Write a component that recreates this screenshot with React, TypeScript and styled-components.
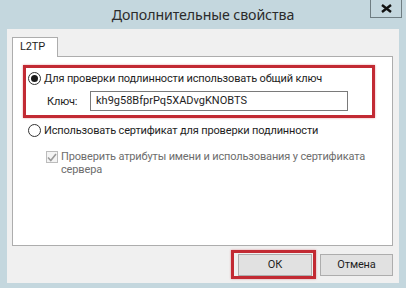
import styled, { createGlobalStyle } from "styled-components";

const GlobalStyle = createGlobalStyle`
  html, body {
    margin: 0;
    padding: 0;
  }
  body {
    width: 406px;
    height: 288px;
    overflow: hidden;
    font-family: Roboto, "Noto Sans", sans-serif;
    font-size: 11px;
    letter-spacing: -0.15px;
    color: #1e1e1e;
  }
`;

// window frame
const Window = styled.div`
  width: 406px;
  height: 288px;
  box-sizing: border-box;
  background: #c4d7de;
  display: flex;
  flex-direction: column;
  padding: 0 7px 5px 7px;
`;
const TitleBar = styled.div`
  height: 29px;
  margin: 0 -7px;
  display: grid;
  grid-template-columns: 1fr auto 1fr;
`;
const Title = styled.div`
  grid-column: 2;
  font-family: "Noto Sans", sans-serif;
  font-size: 14.2px;
  letter-spacing: -0.1px;
  line-height: 29px;
  color: #2b2b2b;
`;
const CloseButton = styled.div`
  grid-column: 3;
  justify-self: end;
  align-self: start;
  margin-right: 4px;
  width: 32px;
  height: 18px;
  box-sizing: border-box;
  border: 1px solid #6f7d82;
  border-top: none;
  display: flex;
  align-items: center;
  justify-content: center;
`;

// client area
const Client = styled.div`
  flex: 1;
  background: #f0f0f0;
  display: flex;
  flex-direction: column;
  padding: 8px 6px 7px 5px;
`;
const TabStrip = styled.div`
  display: flex;
  height: 19px;
`;
const Tab = styled.div`
  width: 46px;
  box-sizing: border-box;
  background: #fff;
  border: 1px solid #adadad;
  border-bottom: none;
  line-height: 18px;
  padding-left: 7px;
  margin-bottom: -1px;
  position: relative;
  z-index: 1;
`;
const Panel = styled.div`
  flex: 1;
  background: #fff;
  border: 1px solid #adadad;
  padding: 8px 17px 0 10px;
  display: flex;
  flex-direction: column;
`;
const Highlight = styled.div`
  border: 3px solid #c22a33;
  box-shadow: 0 0 2px rgba(200, 40, 50, 0.45);
  padding: 3px 0 4px 2px;
  display: flex;
  flex-direction: column;
  gap: 6px;
`;
const OptionRow = styled.div<{ $indent?: number }>`
  display: flex;
  align-items: center;
  height: 14px;
  margin-left: ${(p) => p.$indent ?? 0}px;
  gap: 3px;
`;
const Radio = styled.span<{ $checked?: boolean }>`
  width: 13px;
  height: 13px;
  box-sizing: border-box;
  border-radius: 50%;
  border: 1px solid #333;
  background: #fff;
  display: flex;
  align-items: center;
  justify-content: center;
  &::after {
    content: "";
    width: 7px;
    height: 7px;
    border-radius: 50%;
    background: ${(p) => (p.$checked ? "#1a1a1a" : "transparent")};
  }
`;
const KeyRow = styled.div`
  display: flex;
  align-items: center;
  padding-left: 19px;
`;
const KeyLabel = styled.span`
  width: 43px;
`;
const KeyInput = styled.div`
  width: 258px;
  height: 20px;
  box-sizing: border-box;
  border: 1px solid #7a7a7a;
  padding-left: 5px;
  line-height: 18px;
  letter-spacing: 0;
`;
const CheckRow = styled.div`
  display: flex;
  align-items: flex-start;
  margin: 13px 0 0 23px;
  gap: 3px;
  color: #6d6d6d;
`;
const CheckBox = styled.span`
  flex: none;
  width: 12px;
  height: 12px;
  margin-top: 1px;
  box-sizing: border-box;
  border: 1px solid #bcbcbc;
  background: #f4f4f4;
  display: flex;
  align-items: center;
  justify-content: center;
`;
const CheckText = styled.span`
  line-height: 13px;
  width: 312px;
`;

// buttons
const ButtonRow = styled.div`
  margin-top: 8px;
  height: 22px;
  display: flex;
  justify-content: flex-end;
  align-items: center;
  gap: 4px;
`;
const Marked = styled.div`
  border: 3px solid #c22a33;
  box-shadow: 0 0 2px rgba(200, 40, 50, 0.45);
  padding: 1px 1px 0 4px;
  margin: -4px 0 -3px 0;
`;
const Button = styled.div<{ $width: number }>`
  width: ${(p) => p.$width}px;
  height: 22px;
  box-sizing: border-box;
  border: 1px solid #adadad;
  background: #e1e1e1;
  line-height: 20px;
  text-align: center;
`;

export default function App() {
  return (
    <>
      <GlobalStyle />
      <Window>
        <TitleBar>
          <Title>Дополнительные свойства</Title>
          <CloseButton>
            <svg width="11" height="9" viewBox="0 0 11 9">
              <path d="M1 1 L10 8 M10 1 L1 8" stroke="#111" strokeWidth="2.4" />
            </svg>
          </CloseButton>
        </TitleBar>
        <Client>
          <TabStrip>
            <Tab>L2TP</Tab>
          </TabStrip>
          <Panel>
            <Highlight>
              <OptionRow>
                <Radio $checked />
                <span>Для проверки подлинности использовать общий ключ</span>
              </OptionRow>
              <KeyRow>
                <KeyLabel>Ключ:</KeyLabel>
                <KeyInput>kh9g58BfprPq5XADvgKNOBTS</KeyInput>
              </KeyRow>
            </Highlight>
            <OptionRow $indent={5} style={{ marginTop: 5 }}>
              <Radio />
              <span>Использовать сертификат для проверки подлинности</span>
            </OptionRow>
            <CheckRow>
              <CheckBox>
                <svg width="10" height="9" viewBox="0 0 10 9">
                  <path d="M1 4.5 L3.8 7.5 L9 1" fill="none" stroke="#9a9a9a" strokeWidth="1.6" />
                </svg>
              </CheckBox>
              <CheckText>
                Проверить атрибуты имени и использования у сертификата сервера
              </CheckText>
            </CheckRow>
          </Panel>
          <ButtonRow>
            <Marked>
              <Button $width={74}>ОК</Button>
            </Marked>
            <Button $width={73}>Отмена</Button>
          </ButtonRow>
        </Client>
      </Window>
    </>
  );
}
